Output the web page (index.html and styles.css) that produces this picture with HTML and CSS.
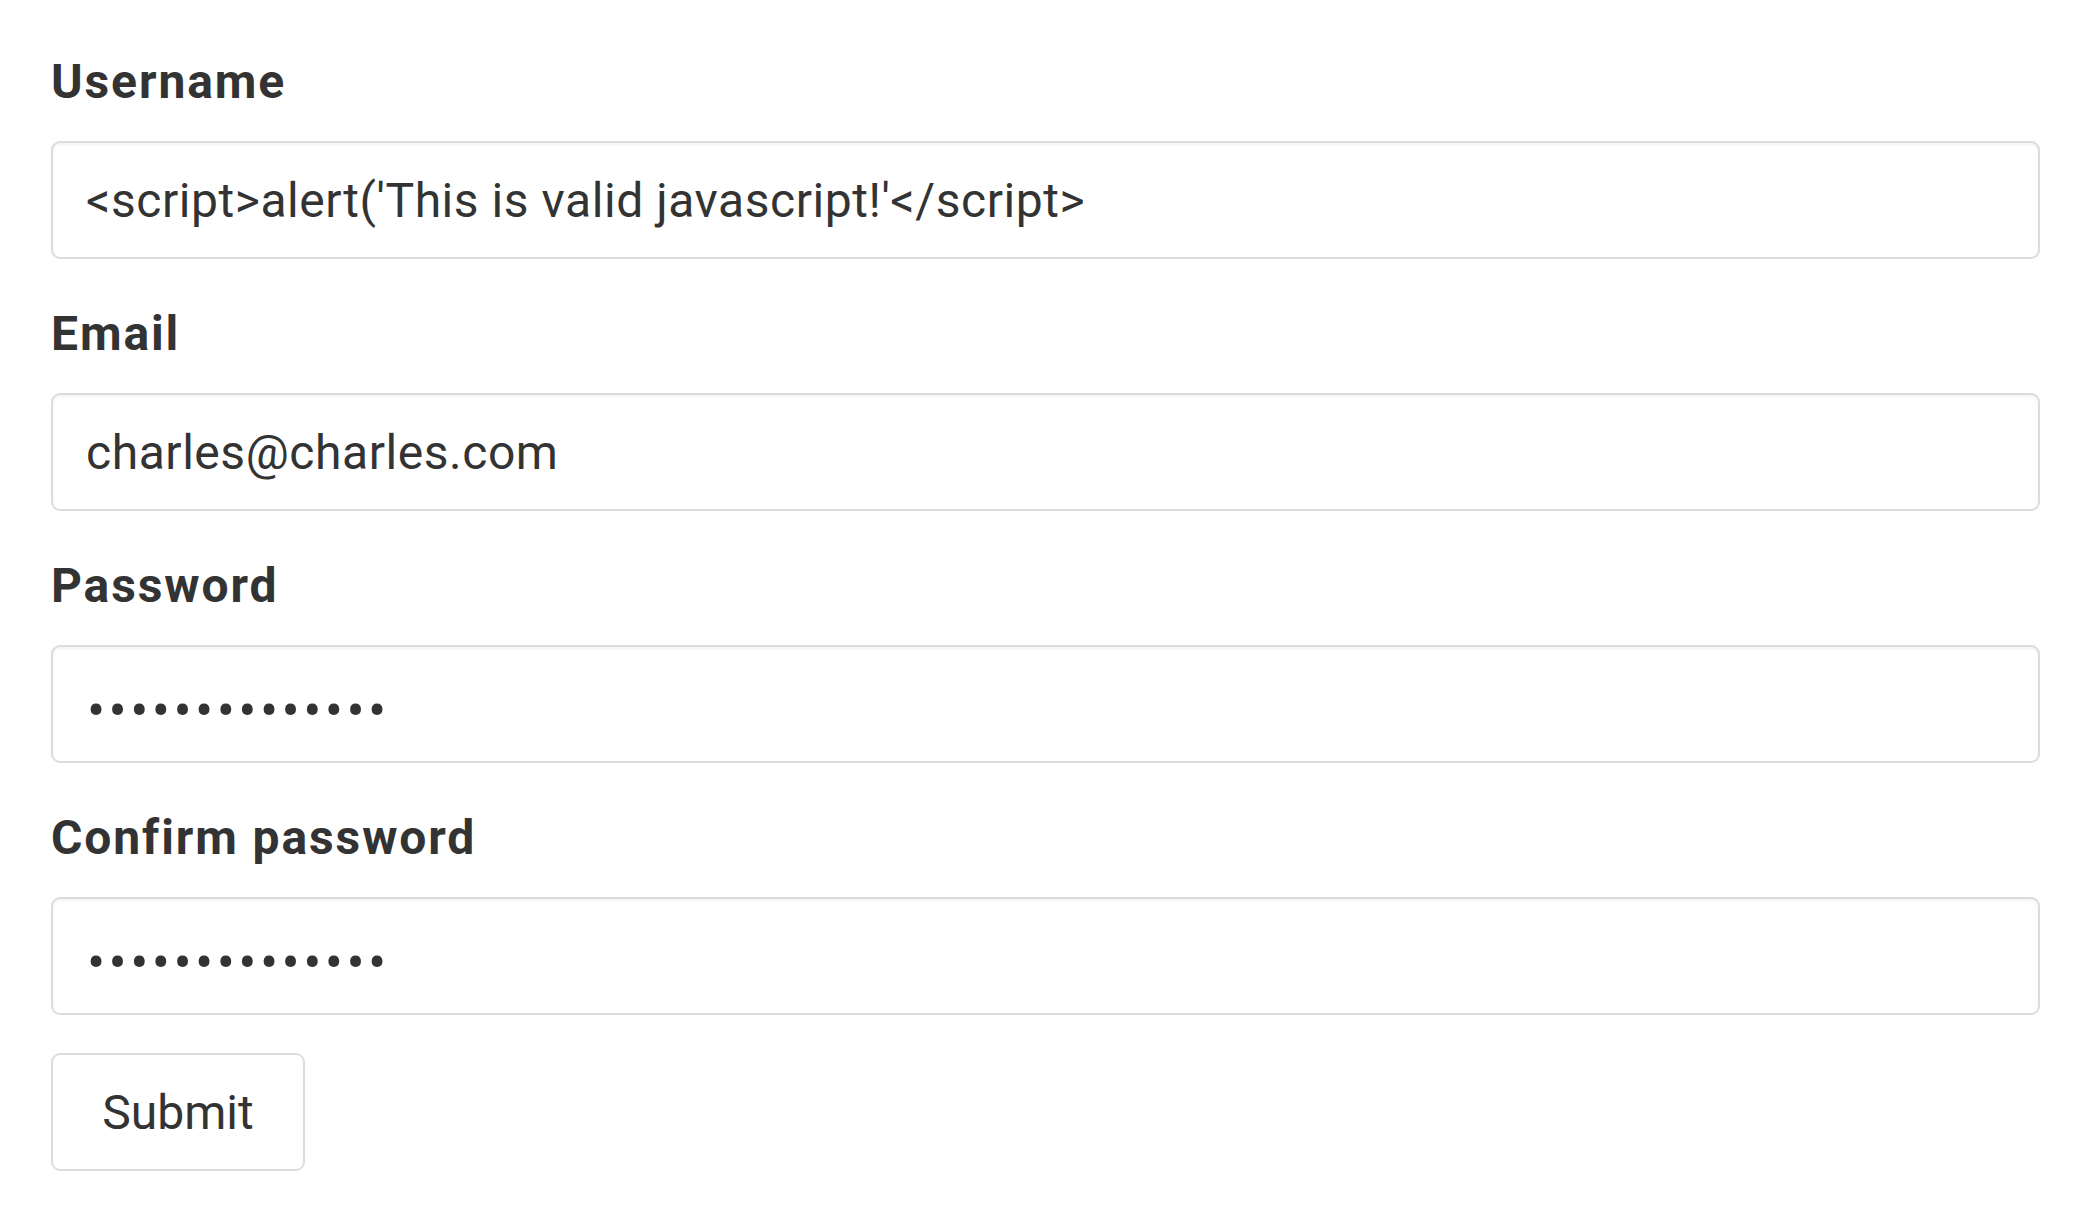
FILE: index.html
```html
<!DOCTYPE html>
<html lang="en">
<head>
<meta charset="utf-8">
<title>Sign up</title>
<link rel="stylesheet" href="styles.css">
</head>
<body>
<form class="form">
  <div class="group">
    <label class="label" for="username">Username</label>
    <input class="field" id="username" type="text" value="<script>alert('This is valid javascript!'</script>">
  </div>
  <div class="group">
    <label class="label" for="email">Email</label>
    <input class="field" id="email" type="text" value="charles@charles.com">
  </div>
  <div class="group">
    <label class="label" for="password">Password</label>
    <input class="field secret" id="password" type="password" value="abcdefghijklmn">
  </div>
  <div class="group last">
    <label class="label" for="confirm">Confirm password</label>
    <input class="field secret" id="confirm" type="password" value="abcdefghijklmn">
  </div>
  <button class="submit" type="button">Submit</button>
</form>
</body>
</html>
```

FILE: styles.css
```css
html, body {
  margin: 0;
  padding: 0;
  background: #ffffff;
}

body {
  font-family: Roboto, "Liberation Sans", sans-serif;
  color: #333333;
}

.form {
  display: flex;
  flex-direction: column;
  align-items: flex-start;
  padding: 53px 50px 0 51px;
}

.group {
  display: flex;
  flex-direction: column;
  align-self: stretch;
  margin-bottom: 46px;
}

.group.last {
  margin-bottom: 38px;
}

.label {
  font-size: 48px;
  font-weight: 700;
  line-height: 58px;
  letter-spacing: 1.9px;
  margin-bottom: 30px;
  color: #333333;
}

.field {
  box-sizing: border-box;
  height: 118px;
  width: 100%;
  margin: 0;
  padding: 0 33px;
  border: 2px solid #dcdcdc;
  border-radius: 9px;
  box-shadow: inset 0 2px 3px rgba(0, 0, 0, 0.05);
  font-family: Roboto, "Liberation Sans", sans-serif;
  font-size: 48px;
  letter-spacing: 0.55px;
  color: #333333;
  background: #ffffff;
  outline: none;
}

.field.secret {
  font-size: 54px;
  letter-spacing: 3.4px;
  padding-top: 12px;
  padding-left: 34px;
}

.submit {
  box-sizing: border-box;
  height: 118px;
  width: 254px;
  margin: 0;
  padding: 0;
  border: 2px solid #dcdcdc;
  border-radius: 9px;
  background: #ffffff;
  font-family: Roboto, "Liberation Sans", sans-serif;
  font-size: 48px;
  color: #333333;
}
```
